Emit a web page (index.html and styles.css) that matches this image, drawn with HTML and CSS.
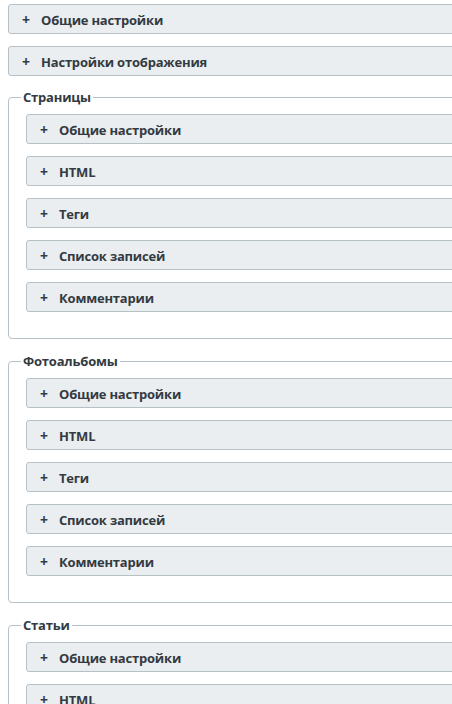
FILE: index.html
```html
<!DOCTYPE html>
<html lang="ru">
<head>
  <meta charset="UTF-8" />
  <title>Настройки</title>
  <link rel="stylesheet" href="styles.css">
</head>
<body>
<div class="page">

  <!-- ========== Общие ========== -->
  <div class="bar"><span class="plus">+</span>Общие настройки</div>
  <div class="bar"><span class="plus">+</span>Настройки отображения</div>

  <!-- ========== Страницы ========== -->
  <fieldset class="grupo">
    <legend>Страницы</legend>
    <div class="bar"><span class="plus">+</span>Общие настройки</div>
    <div class="bar"><span class="plus">+</span>HTML</div>
    <div class="bar"><span class="plus">+</span>Теги</div>
    <div class="bar"><span class="plus">+</span>Список записей</div>
    <div class="bar"><span class="plus">+</span>Комментарии</div>
  </fieldset>

  <!-- ========== Фотоальбомы ========== -->
  <fieldset class="grupo">
    <legend>Фотоальбомы</legend>
    <div class="bar"><span class="plus">+</span>Общие настройки</div>
    <div class="bar"><span class="plus">+</span>HTML</div>
    <div class="bar"><span class="plus">+</span>Теги</div>
    <div class="bar"><span class="plus">+</span>Список записей</div>
    <div class="bar"><span class="plus">+</span>Комментарии</div>
  </fieldset>

  <!-- ========== Статьи ========== -->
  <fieldset class="grupo">
    <legend>Статьи</legend>
    <div class="bar"><span class="plus">+</span>Общие настройки</div>
    <div class="bar"><span class="plus">+</span>HTML</div>
    <div class="bar"><span class="plus">+</span>Теги</div>
    <div class="bar"><span class="plus">+</span>Список записей</div>
    <div class="bar"><span class="plus">+</span>Комментарии</div>
  </fieldset>

</div>
</body>
</html>
```

FILE: styles.css
```css
:root{
  --borde:#b5c1c7; --fondo-bar:#eaeef0; --texto:#333a42;
}
html,body{overflow:hidden}
body{margin:4px 0 0 8px;background:#fff;font-family:"Open Sans",Arial,sans-serif;font-size:13px;font-weight:700;color:var(--texto)}
.page{width:640px}

/* ---------- Barras ---------- */
.bar{
  height:28px;line-height:30px;margin-bottom:12px;
  background:var(--fondo-bar);border:1px solid var(--borde);border-radius:3px;
  padding-left:13px;white-space:nowrap;letter-spacing:-.2px;
}
.plus{display:inline-block;width:19px;font-size:14px}

/* ---------- Grupos ---------- */
.grupo{
  margin:0 0 13px;padding:8px 0 14px 17px;
  border:1px solid var(--borde);border-radius:4px;
}
.grupo legend{margin-left:-5px;padding:0 2px;line-height:18px;letter-spacing:-.2px}
```
